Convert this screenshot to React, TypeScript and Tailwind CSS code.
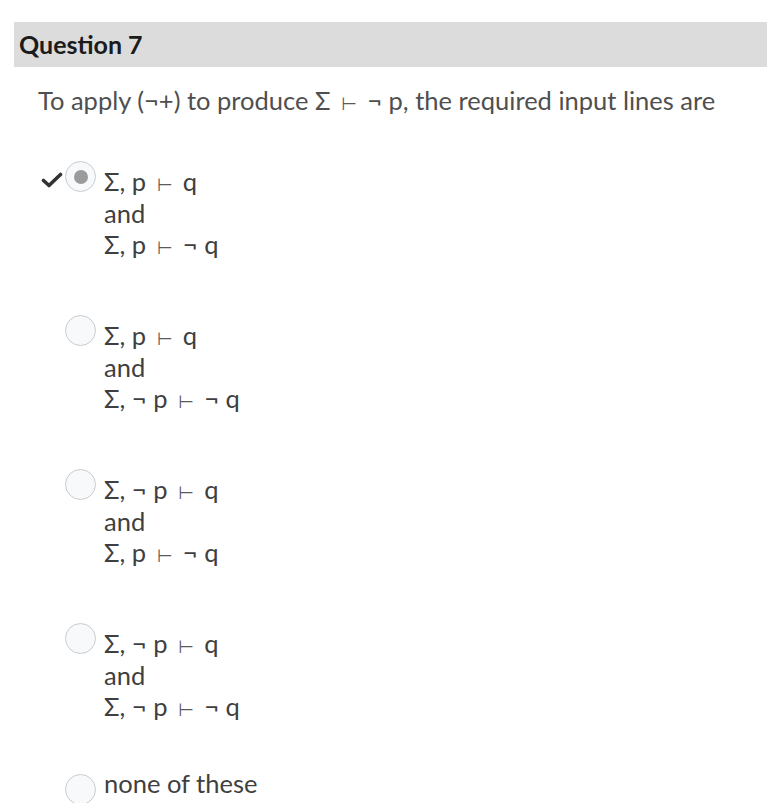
import React from 'react';

const options = [
  { lines: ['Σ, p ⊢ q', 'and', 'Σ, p ⊢ ¬ q'], selected: true },
  { lines: ['Σ, p ⊢ q', 'and', 'Σ, ¬ p ⊢ ¬ q'], selected: false },
  { lines: ['Σ, ¬ p ⊢ q', 'and', 'Σ, p ⊢ ¬ q'], selected: false },
  { lines: ['Σ, ¬ p ⊢ q', 'and', 'Σ, ¬ p ⊢ ¬ q'], selected: false },
  { lines: ['none of these'], selected: false },
];

// the turnstile is thin and small in the original, Lato has no glyph for it
const Formula: React.FC<{ text: string }> = ({ text }) => {
  const parts = text.split('⊢');
  return (
    <>
      {parts.map((p, i) => (
        <React.Fragment key={i}>
          {p}
          {i < parts.length - 1 && (
            <span className="text-[18px] leading-none text-[#5a5a5a] mx-[4px]" style={{ fontFamily: '"DejaVu Sans", sans-serif' }}>⊢</span>
          )}
        </React.Fragment>
      ))}
    </>
  );
};

const Radio: React.FC<{ selected: boolean }> = ({ selected }) => (
  <div className="w-[31px] h-[31px] rounded-full border border-[#c7cdd1] bg-[#f7f9fb] flex items-center justify-center shrink-0">
    {selected && <div className="w-[14px] h-[14px] rounded-full bg-[#9b9b9b]" />}
  </div>
);

export default function App() {
  return (
    <div className="min-h-screen bg-white text-[#2d3b45]" style={{ fontFamily: 'Lato, "Noto Sans", sans-serif' }}>
      <div className="pt-[22px] pl-[14px]">
        <div className="h-[45px] bg-[#dcdcdc] flex items-center pl-[5px]">
          <h2 className="text-[25px] font-bold text-[#1b1b1b]">Question 7</h2>
        </div>
      </div>
      <p className="pl-[38px] mt-[17px] h-[32px] text-[25.5px] leading-[32px] text-[#4f4f4f] whitespace-pre">
        <Formula text="To apply (¬+) to produce Σ ⊢ ¬ p, the required input lines are" />
      </p>
      <div className="mt-[50px] flex flex-col">
        {options.map((opt, i) => {
          const last = i === options.length - 1;
          return (
            <div key={i} className={`flex items-start ${i === 0 ? '' : last ? 'mt-[45px]' : 'mt-[59.5px]'}`}>
              <div className="w-[65px] flex justify-end pr-[2px] pt-[6px] shrink-0">
                {opt.selected && (
                  <svg width="22" height="16" viewBox="0 0 22 16">
                    <path d="M2.5 8.5 L8 13.5 L19.5 2.5" fill="none" stroke="#333333" strokeWidth="3.6" strokeLinecap="round" strokeLinejoin="round" />
                  </svg>
                )}
              </div>
              <div className={`${last ? 'mt-[6px]' : '-mt-[5px]'} mr-[8px]`}><Radio selected={opt.selected} /></div>
              <div className="text-[25.5px] leading-[31.5px] text-[#3f3f3f] whitespace-pre">
                {opt.lines.map((l, j) => (
                  <div key={j} className="h-[31.5px]"><Formula text={l} /></div>
                ))}
              </div>
            </div>
          );
        })}
      </div>
    </div>
  );
}
